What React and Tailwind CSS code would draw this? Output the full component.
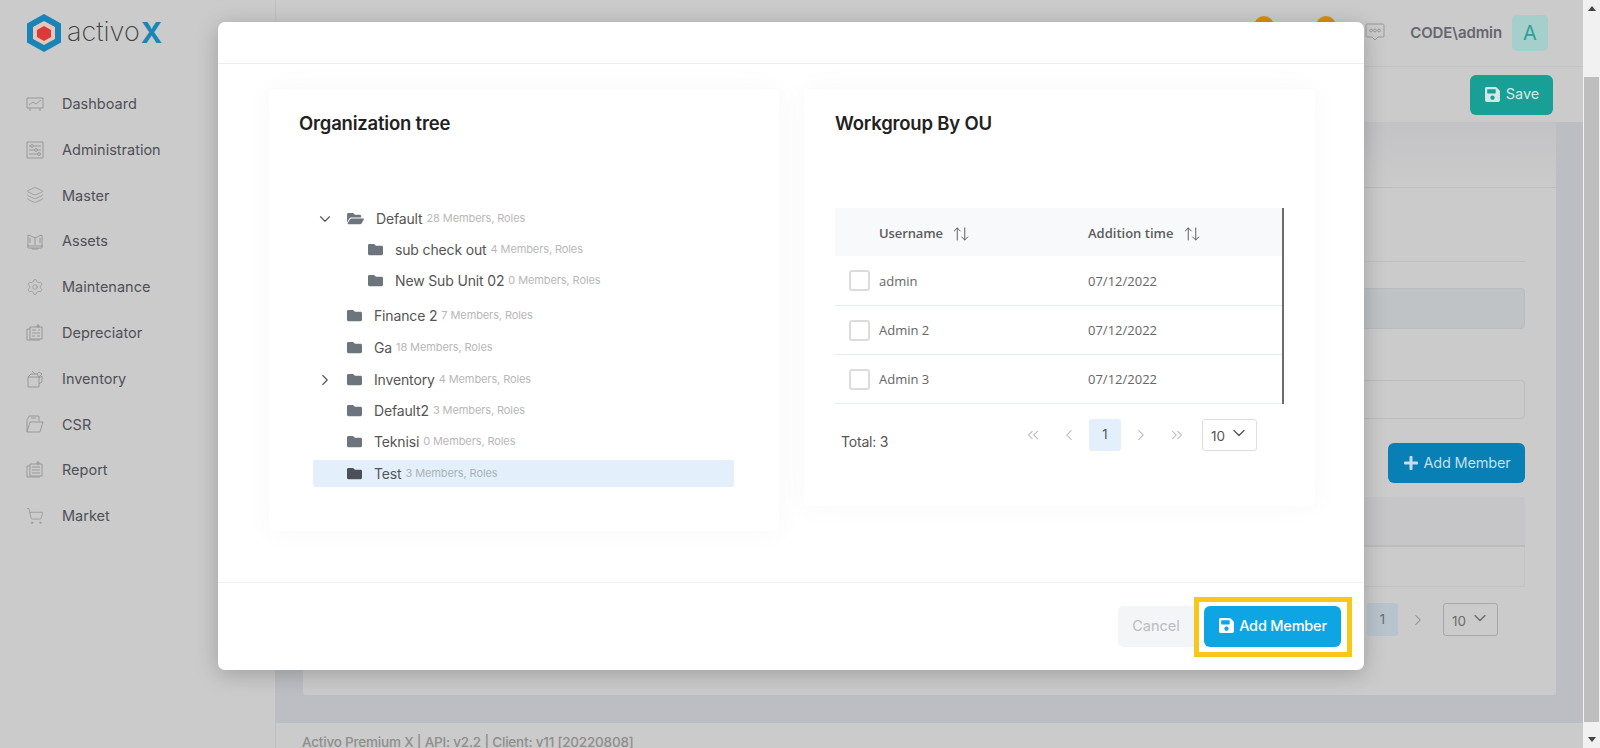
import React from "react";
import { FaFolder, FaFolderOpen, FaPlus, FaSave } from "react-icons/fa";
import { ArrowUpDown, ChevronDown, ChevronLeft, ChevronRight, ChevronsLeft, ChevronsRight, Layers, Settings, ShoppingCart } from "lucide-react";

const Ico = ({ children }) => (
  <svg viewBox="0 0 18 18" className="h-[18px] w-[18px]" fill="none" stroke="#8e8e8e" strokeWidth="0.8">
    {children}
  </svg>
);

const navItems = [
  {
    label: "Dashboard",
    icon: (
      <Ico>
        <path d="M1 3h16v10H1zM4 13v3M14 13v3M3 10l4-3 3 2 5-4" />
      </Ico>
    ),
  },
  {
    label: "Administration",
    icon: (
      <Ico>
        <path d="M1 1h16v16H1zM3 5h12M3 9h12M3 13h12" />
        <circle cx="6" cy="5" r="1.4" fill="#cbcbcb" />
        <circle cx="10" cy="9" r="1.4" fill="#cbcbcb" />
        <circle cx="13" cy="13" r="1.4" fill="#cbcbcb" />
      </Ico>
    ),
  },
  { label: "Master", icon: <Layers size={18} strokeWidth={0.9} color="#8e8e8e" /> },
  {
    label: "Assets",
    icon: (
      <Ico>
        <path d="M2 3v13h14V3M2 3l3 1 4 2 4-2 3-1M9 6v7M4 6v5M14 6v5M1 14h16M6 16v1h6v-1" />
      </Ico>
    ),
  },
  { label: "Maintenance", icon: <Settings size={18} strokeWidth={0.9} color="#8e8e8e" /> },
  {
    label: "Depreciator",
    icon: (
      <Ico>
        <path d="M1 5h3M1 5v11h13M4 3h12v12H4zM11 1h2v2h-2zM6 6h4M12 6h2M6 9h8M6 12h3M11 12h3" />
      </Ico>
    ),
  },
  {
    label: "Inventory",
    icon: (
      <Ico>
        <path d="M2 7h11v10H2zM2 7l3-3h6l2 3M11 4l2-2 3 2-3 3M13 8l3-2v6l-3 2M6 1l3 3" />
      </Ico>
    ),
  },
  {
    label: "CSR",
    icon: (
      <Ico>
        <path d="M1 5l2-4h10v5M1 5v12h13l3-10H4l-3 10M5 3h5" />
      </Ico>
    ),
  },
  {
    label: "Report",
    icon: (
      <Ico>
        <path d="M1 5h3M1 5v11h13M4 3h12v12H4zM11 1h2v2h-2zM6 6h8M6 9h8M6 12h8" />
      </Ico>
    ),
  },
  { label: "Market", icon: <ShoppingCart size={18} strokeWidth={0.9} color="#8e8e8e" /> },
];

const treeRows = [
  { name: "Default", meta: "28 Members, Roles", slot: "w-[33px]", toggle: "open", open: true },
  { name: "sub check out", meta: "4 Members, Roles", slot: "w-[54px]", className: "mt-[4px]" },
  { name: "New Sub Unit 02", meta: "0 Members, Roles", slot: "w-[54px]", className: "mt-[4px]" },
  { name: "Finance 2", meta: "7 Members, Roles", slot: "w-[33px]", className: "mt-[8px]" },
  { name: "Ga", meta: "18 Members, Roles", slot: "w-[33px]", className: "mt-[5px]" },
  { name: "Inventory", meta: "4 Members, Roles", slot: "w-[33px]", toggle: "closed", className: "mt-[5px]" },
  { name: "Default2", meta: "3 Members, Roles", slot: "w-[33px]", className: "mt-[4px]" },
  { name: "Teknisi", meta: "0 Members, Roles", slot: "w-[33px]", className: "mt-[4px]" },
  { name: "Test", meta: "3 Members, Roles", slot: "w-[33px]", selected: true, className: "mt-[5px]" },
];

const members = ["admin", "Admin 2", "Admin 3"];

const TreeRow = ({ row }) => (
  <div className={`flex h-[27px] items-center rounded-[2px] ${row.selected ? "bg-[#e3f0fb]" : ""} ${row.className || ""}`}>
    <div className={`${row.slot} flex pl-[3px] text-[#555]`}>
      {row.toggle === "open" && <ChevronDown size={18} strokeWidth={1.5} />}
      {row.toggle === "closed" && <ChevronRight size={18} strokeWidth={1.5} />}
    </div>
    {row.open ? (
      <FaFolderOpen className="h-[15px] w-[19px] text-[#6c757d]" />
    ) : (
      <FaFolder className={`h-[15px] w-[17px] ${row.selected ? "text-[#495057]" : "text-[#6c757d]"}`} />
    )}
    <span className="ml-[11px] text-[14px] tracking-[-0.15px] text-[#555]">{row.name}</span>
    <span className={`ml-[4px] text-[11px] tracking-[-0.1px] ${row.selected ? "text-[#aab2ba]" : "text-[#b8b8b8]"}`}>{row.meta}</span>
  </div>
);

const Modal = () => (
  <div className="absolute left-[218px] top-[22px] flex h-[648px] w-[1146px] flex-col rounded-[7px] bg-white shadow-[0_4px_22px_rgba(0,0,0,0.22)]">
    <div className="h-[42px] shrink-0 border-b border-[#eeeeee]" />
    <div className="flex h-[518px] items-start gap-[25px] pl-[51px] pt-[25px]">
      <section className="h-[442px] w-[510px] rounded-[4px] bg-white pl-[30px] pr-[45px] pt-[21px] shadow-[0_0_30px_rgba(0,0,0,0.035)]">
        <h2 className="text-[18.5px] font-semibold leading-[27px] tracking-[-0.2px] text-[#222]">Organization tree</h2>
        <div className="ml-[14px] mt-[68px] flex flex-col">
          {treeRows.map((row) => (
            <TreeRow key={row.name} row={row} />
          ))}
        </div>
      </section>
      <section className="h-[417px] w-[511px] rounded-[4px] bg-white pl-[31px] pt-[21px] shadow-[0_0_30px_rgba(0,0,0,0.035)]">
        <h2 className="text-[18.5px] font-semibold leading-[27px] tracking-[-0.2px] text-[#222]">Workgroup By OU</h2>
        <table className="mt-[71px] w-[449px] table-fixed border-r-2 border-[#6b6b6b] font-['Open_Sans',sans-serif] text-[13px] text-[#666]">
          <thead>
            <tr className="h-[48px] bg-[#f8f9fa] text-left text-[#5d5d5d]">
              <th className="w-[44px]" />
              <th className="w-[209px] pt-[3px] font-semibold">
                <span className="flex items-center gap-[9px] tracking-[-0.1px]">
                  Username <ArrowUpDown size={18} strokeWidth={1.3} />
                </span>
              </th>
              <th className="pt-[3px] font-semibold">
                <span className="flex items-center gap-[10px]">
                  Addition time <ArrowUpDown size={18} strokeWidth={1.3} />
                </span>
              </th>
            </tr>
          </thead>
          <tbody>
            {members.map((name) => (
              <tr key={name} className="h-[49px] border-b border-[#e9ecef]">
                <td className="pl-[14px]">
                  <div className="mt-[1px] h-[21px] w-[21px] rounded-[3px] border-2 border-[#dcdcdc] bg-white" />
                </td>
                <td className="pt-[2px]">{name}</td>
                <td className="pt-[2px]">07/12/2022</td>
              </tr>
            ))}
          </tbody>
        </table>
        <div className="mt-[15px] flex w-[449px] items-start pr-[27px]">
          <span className="ml-[6px] mt-[14px] text-[14px] leading-[18px] tracking-[-0.2px] text-[#555]">Total: 3</span>
          <div className="ml-auto flex items-center gap-1 text-[#b0b0b0]">
            <span className="flex h-[32px] w-[32px] items-center justify-center"><ChevronsLeft size={18} strokeWidth={1.4} /></span>
            <span className="flex h-[32px] w-[32px] items-center justify-center"><ChevronLeft size={18} strokeWidth={1.4} /></span>
            <span className="flex h-[32px] w-[32px] items-center justify-center rounded-[3px] bg-[#e3f0fb] text-[13px] text-[#555]">1</span>
            <span className="flex h-[32px] w-[32px] items-center justify-center"><ChevronRight size={18} strokeWidth={1.4} /></span>
            <span className="flex h-[32px] w-[32px] items-center justify-center"><ChevronsRight size={18} strokeWidth={1.4} /></span>
            <div className="ml-[5px] flex h-[32px] w-[55px] items-center justify-between rounded-[3px] border border-[#dedede] pl-[8px] pr-[7px] text-[#555]">
              <span className="mt-[3px] text-[13.5px]">10</span>
              <ChevronDown size={20} strokeWidth={1.6} className="-mt-[4px]" />
            </div>
          </div>
        </div>
      </section>
    </div>
    <div className="flex flex-1 items-center justify-end border-t border-[#f1f1f1] pr-[12px]">
      <button className="h-[41px] w-[76px] rounded-l-[5px] bg-[#f3f5f7] pb-[1px] text-[14.5px] text-[#b9bdc2]">Cancel</button>
      <div className="border-[5px] border-[#f9c71a] pb-[5px] pl-[5px] pr-[6px] pt-[4px]">
        <button className="flex h-[41px] w-[137px] items-center justify-center gap-[4px] rounded-[6px] bg-[#0ea5e4] pb-[1px] text-[14.5px] font-medium tracking-[-0.2px] text-white">
          <FaSave className="h-[17px] w-[17px]" /> Add Member
        </button>
      </div>
    </div>
  </div>
);

const App = () => (
  <div className="relative flex h-[748px] w-[1600px] overflow-hidden bg-[#cbcbcb] font-['Inter',sans-serif]">
    <aside className="w-[276px] shrink-0 border-r border-[#c0c0c0] bg-[#cbcbcb]">
      <div className="flex h-[81px] items-start pl-[26px] pt-[13px]">
        <svg viewBox="0 0 36 40" className="h-[40px] w-[36px]">
          <path d="M18 1 35 10.5v19L18 39 1 29.5v-19z" fill="#1a84b6" />
          <path d="M18 8 29 14v12l-11 6-11-6V14z" fill="#e8c6ba" />
          <path d="M18 13 25 17v7l-7 4-7-4v-7z" fill="#dc3a3a" />
        </svg>
        <span className="ml-[5px] mt-[2px] text-[27px] font-extralight leading-[34px] text-[#3f3f3f]">activo</span>
        <span className="ml-[1px] mt-[2px] text-[29px] font-bold leading-[36px] text-[#1a86b8]">X</span>
      </div>
      <nav className="flex flex-col">
        {navItems.map((item) => (
          <div key={item.label} className="flex h-[45.8px] items-center pl-[26px]">
            <span className="flex w-[36px] shrink-0">{item.icon}</span>
            <span className="text-[14.5px] text-[#505057]">{item.label}</span>
          </div>
        ))}
      </nav>
    </aside>

    <main className="flex min-w-0 flex-1 flex-col">
      <header className="flex h-[67px] shrink-0 items-center justify-end border-b border-[#c4c4c4] pr-[35px]">
        <span className="mb-[14px] mr-[42px] h-5 w-5 rounded-full bg-[#d98f0a]" />
        <span className="mb-[14px] mr-[29px] h-5 w-5 rounded-full bg-[#d98f0a]" />
        <svg viewBox="0 0 20 19" className="mb-[2px] mr-[25px] h-[19px] w-[20px]" fill="none" stroke="#8d8d8d" strokeWidth="0.8">
          <path d="M2 1h16a1 1 0 0 1 1 1v11a1 1 0 0 1-1 1h-5l-3 3-3-3H2a1 1 0 0 1-1-1V2a1 1 0 0 1 1-1z" />
          <circle cx="6" cy="7.5" r="1.4" />
          <circle cx="10" cy="7.5" r="1.4" />
          <circle cx="14" cy="7.5" r="1.4" />
        </svg>
        <span className="mr-[10px] text-[15px] font-semibold tracking-[-0.1px] text-[#66666e]">CODE\admin</span>
        <span className="flex h-[36px] w-[36px] items-center justify-center rounded-[5px] bg-[#a5cfcb] text-[20px] text-[#2f9f98]">A</span>
      </header>

      <div className="flex h-[55px] shrink-0 items-center justify-end pr-[30px]">
        <button className="flex h-[40px] w-[83px] items-center justify-center gap-[5px] rounded-[6px] bg-[#18a096] pb-[1px] text-[14.5px] text-[#d4e9e6]">
          <FaSave className="h-[17px] w-[17px]" /> Save
        </button>
      </div>

      <div className="h-[601px] shrink-0 bg-[#bdbec3] px-[27px] pb-[28px]">
        <div className="h-full rounded-[3px] bg-[#cbcbcb]">
          <div className="h-[66px] border-b border-[#bdbdbd] bg-gradient-to-b from-[#c3c3c6] to-[#cbcbcb]" />
          <div className="px-[31px]">
            <div className="h-[74px] border-b border-[#c0c0c0]" />
            <div className="mt-[26px] h-[41px] rounded-[4px] border border-[#b9bcbf] bg-[#c0c3c5]" />
            <div className="mt-[51px] h-[39px] rounded-[4px] border border-[#bdbdbd]" />
            <div className="mt-[24px] flex justify-end">
              <button className="flex h-[40px] w-[137px] items-center justify-center gap-[5px] rounded-[6px] bg-[#087fb5] text-[14.5px] tracking-[-0.2px] text-[#c4dfeb]">
                <FaPlus className="h-[16px] w-[16px]" /> Add Member
              </button>
            </div>
            <div className="mt-[14px] h-[50px] border-b-2 border-[#bcbcbc] bg-[#c6c6c8]" />
            <div className="h-[40px] border-b border-r border-[#c4c4c4]" />
            <div className="mt-[16px] flex items-center justify-end pr-[27px] text-[#6b6b6b]">
              <span className="flex h-[33px] w-[31px] items-center justify-center rounded-[3px] bg-[#b8c4cd] text-[13px]">1</span>
              <ChevronRight size={18} strokeWidth={1.4} className="ml-[11px] mr-[15px] text-[#8a8a8a]" />
              <div className="ml-[1px] flex h-[33px] w-[55px] items-center justify-between rounded-[3px] border border-[#a8a8a8] pl-[8px] pr-[7px]">
                <span className="mt-[3px] text-[13.5px]">10</span>
                <ChevronDown size={20} strokeWidth={1.6} className="-mt-[4px]" />
              </div>
            </div>
          </div>
        </div>
      </div>

      <footer className="flex-1 pl-[26px] pt-[9px] text-[13.5px] font-medium leading-[20px] tracking-[-0.2px] text-[#8e8e8e]">
        Activo Premium X | API: v2.2 | Client: v11 [20220808]
      </footer>
    </main>

    <div className="flex w-[17px] shrink-0 flex-col bg-[#f1f1f1]">
      <div className="flex h-[77px] justify-center pt-[6px]">
        <span className="h-0 w-0 border-x-[4px] border-b-[5px] border-x-transparent border-b-[#444]" />
      </div>
      <div className="mx-[1px] h-[645px] bg-[#bebebe]" />
      <div className="flex flex-1 items-end justify-center pb-[6px]">
        <span className="h-0 w-0 border-x-[4px] border-t-[5px] border-x-transparent border-t-[#444]" />
      </div>
    </div>

    <Modal />
  </div>
);

export default App;
